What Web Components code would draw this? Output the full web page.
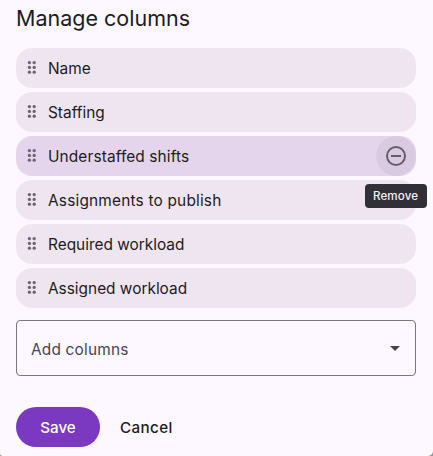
<!DOCTYPE html>
<html lang="en">
<head>
<meta charset="utf-8">
<title>Manage columns</title>
<style>
    body {
        margin: 0;
        background: #98949b;
        color: #1d1b20;
        font-family: Inter, "Liberation Sans", sans-serif;
    }
</style>
</head>
<body>
<column-manager></column-manager>

<script>
class ColumnItem extends HTMLElement {
    constructor() {
        super();
        this.attachShadow({ mode: 'open' });
        this.shadowRoot.innerHTML = `
            <style>
                :host {
                    display: flex;
                    align-items: center;
                    position: relative;
                    height: 40px;
                    border-radius: 16px;
                    background: #eee5f0;
                    font-size: 15.4px;
                    line-height: 24px;
                }
                :host([active]) {
                    background: #e4d5ec;
                }
                .handle {
                    width: 10px;
                    height: 14px;
                    margin: 0 11px 2px;
                    fill: #6c6471;
                }
                .label {
                    flex: 1;
                    white-space: nowrap;
                    padding-top: 1px;
                    letter-spacing: var(--tracking, 0);
                }
                button {
                    display: none;
                    width: 40px;
                    height: 40px;
                    padding: 8px;
                    border: none;
                    border-radius: 50%;
                    background: #d9cae1;
                    cursor: pointer;
                }
                button svg {
                    display: block;
                    fill: none;
                    stroke: #655d6b;
                    stroke-width: 2;
                }
                :host([active]) button {
                    display: block;
                }
            </style>
            <svg class="handle" viewBox="0 0 10 14">
                <circle cx="2.4" cy="2.6" r="1.65"/><circle cx="7.2" cy="2.6" r="1.65"/>
                <circle cx="2.4" cy="7.4" r="1.65"/><circle cx="7.2" cy="7.4" r="1.65"/>
                <circle cx="2.4" cy="12.2" r="1.65"/><circle cx="7.2" cy="12.2" r="1.65"/>
            </svg>
            <span class="label"><slot></slot></span>
            <button aria-label="Remove">
                <svg width="24" height="24" viewBox="0 0 24 24"><circle cx="12" cy="12" r="9"/><path d="M7 12h10"/></svg>
            </button>
            <slot name="tooltip"></slot>
        `;
    }
}

class TipLabel extends HTMLElement {
    constructor() {
        super();
        this.attachShadow({ mode: 'open' });
        this.shadowRoot.innerHTML = `
            <style>
                :host {
                    position: absolute;
                    z-index: 1;
                    top: 48px;
                    right: -11px;
                    box-sizing: border-box;
                    width: 62px;
                    height: 24px;
                    padding-left: 8px;
                    border-radius: 4px;
                    background: #322f38;
                    color: #f5eff7;
                    font-size: 11.6px;
                    font-weight: 500;
                    letter-spacing: 0.1px;
                    line-height: 24px;
                    white-space: nowrap;
                }
            </style>
            <slot></slot>
        `;
    }
}

class SelectField extends HTMLElement {
    constructor() {
        super();
        this.attachShadow({ mode: 'open' });
        this.shadowRoot.innerHTML = `
            <style>
                :host {
                    display: flex;
                    align-items: center;
                    justify-content: space-between;
                    box-sizing: border-box;
                    height: 56px;
                    padding: 2px 15px 0 14px;
                    border: 1px solid #7a757f;
                    border-radius: 4px;
                    color: #49454e;
                    font-size: 15.4px;
                    letter-spacing: 0.2px;
                }
                svg {
                    margin-bottom: 2px;
                    fill: #49454e;
                }
            </style>
            <slot></slot>
            <svg width="10" height="5" viewBox="0 0 10 5"><path d="M0 0h10L5 5z"/></svg>
        `;
    }
}

class ActionButton extends HTMLElement {
    constructor() {
        super();
        this.attachShadow({ mode: 'open' });
        this.shadowRoot.innerHTML = `
            <style>
                :host {
                    display: block;
                }
                button {
                    height: 40px;
                    padding: 0;
                    border: none;
                    background: none;
                    color: inherit;
                    font: 500 15.2px Inter, "Liberation Sans", sans-serif;
                    letter-spacing: 0.4px;
                    cursor: pointer;
                }
                :host([primary]) button {
                    width: 84px;
                    border-radius: 20px;
                    background: #7b39c1;
                    color: #fff;
                    letter-spacing: 0;
                }
            </style>
            <button><slot></slot></button>
        `;
    }
}

class ColumnManager extends HTMLElement {
    constructor() {
        super();
        this.attachShadow({ mode: 'open' });
        this.shadowRoot.innerHTML = `
            <style>
                :host {
                    display: block;
                    box-sizing: border-box;
                    width: 433px;
                    height: 456px;
                    padding: 3px 17px 0 16px;
                    border-radius: 0 0 5px 3px;
                    background: #fdf7ff;
                    overflow: hidden;
                }
                h2 {
                    margin: 0 0 15px;
                    font-size: 21.5px;
                    font-weight: 400;
                    line-height: 30px;
                }
                .list {
                    display: flex;
                    flex-direction: column;
                    gap: 4px;
                    margin-bottom: 12px;
                }
                .wide {
                    --tracking: 0.13px;
                }
                .wider {
                    --tracking: 0.2px;
                }
                .actions {
                    display: flex;
                    gap: 20px;
                    margin-top: 31px;
                }
            </style>
            <h2>Manage columns</h2>
            <div class="list">
                <column-item>Name</column-item>
                <column-item>Staffing</column-item>
                <column-item class="wide" active>Understaffed shifts<tip-label slot="tooltip">Remove</tip-label></column-item>
                <column-item class="wider">Assignments to publish</column-item>
                <column-item>Required workload</column-item>
                <column-item>Assigned workload</column-item>
            </div>
            <select-field>Add columns</select-field>
            <div class="actions">
                <action-button primary>Save</action-button>
                <action-button>Cancel</action-button>
            </div>
        `;
    }
}

customElements.define('column-item', ColumnItem);
customElements.define('tip-label', TipLabel);
customElements.define('select-field', SelectField);
customElements.define('action-button', ActionButton);
customElements.define('column-manager', ColumnManager);
</script>
</body>
</html>
